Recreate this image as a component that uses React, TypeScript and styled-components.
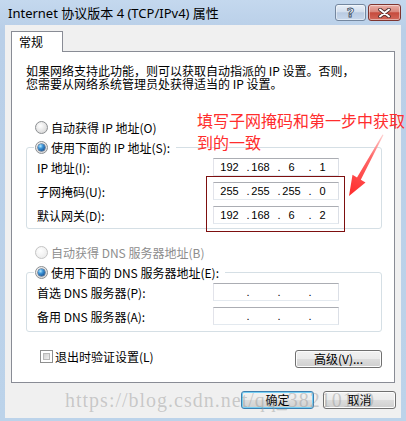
import React from "react";
import styled, { createGlobalStyle } from "styled-components";

const GlobalStyle = createGlobalStyle`
  html, body {
    margin: 0;
    padding: 0;
  }
  body {
    width: 406px;
    height: 421px;
    overflow: hidden;
    background: #bcd3ea;
    font-family: "Noto Sans CJK SC", sans-serif;
  }
`;

const Window = styled.div`
  position: relative;
  width: 406px;
  height: 421px;
  box-sizing: border-box;
  padding: 0 5px 3px 5px;
  display: flex;
  flex-direction: column;
  background: linear-gradient(#c4d8ee, #b9cfe8 30px, #bcd3ea);
`;

const TitleBar = styled.div`
  height: 25px;
  margin: 0 -5px;
  padding: 0 5px 0 8px;
  display: flex;
  align-items: flex-start;
`;

const TitleText = styled.span`
  flex: 1;
  font: 13px/27px "Noto Sans", "Noto Sans CJK SC", sans-serif;
  color: #000;
`;

const CaptionButtons = styled.div`
  display: flex;
  gap: 2px;
  margin-top: 4px;
`;

const CaptionButton = styled.div<{ $kind: "help" | "close" }>`
  width: ${(p) => (p.$kind === "close" ? 33 : 31)}px;
  height: 17px;
  box-sizing: border-box;
  border-radius: 3px;
  display: flex;
  align-items: center;
  justify-content: center;
  border: 1px solid ${(p) => (p.$kind === "close" ? "#7e3530" : "#74879f")};
  background: ${(p) =>
    p.$kind === "close"
      ? "linear-gradient(#eab0a8, #d9877c 45%, #c64b3d 52%, #d2685a)"
      : "linear-gradient(#e8eff8, #d3dfee 45%, #b9cbe2 52%, #c8d8ec)"};
  box-shadow: inset 0 0 0 1px rgba(255, 255, 255, 0.45);
`;

const HelpGlyph = styled.span`
  font: bold 13px/13px "DejaVu Sans", sans-serif;
  color: #f4f7fb;
  -webkit-text-stroke: 0.8px #3d4f66;
`;

const Client = styled.div`
  flex: 1;
  background: #f0f0f0;
  padding: 6px 6px 0 6px;
  display: flex;
  flex-direction: column;
`;

const TabStrip = styled.div`
  display: flex;
  height: 20px;
`;

const Tab = styled.div`
  width: 52px;
  box-sizing: border-box;
  border: 1px solid #898c95;
  border-bottom: none;
  background: #fff;
  padding-left: 7px;
  font-size: 12px;
  line-height: 19px;
  color: #000;
  position: relative;
  z-index: 1;
  margin-bottom: -1px;
  height: 21px;
`;

const Panel = styled.div`
  background: #fff;
  border: 1px solid #898c95;
  padding: 12px 12px 14px 14px;
  display: flex;
  flex-direction: column;
  font-size: 12px;
  color: #000;
`;

const Intro = styled.p`
  margin: 0;
  font-size: 12px;
  line-height: 13px;
  white-space: nowrap;
`;

const RadioRow = styled.div<{ $top?: number; $indent?: number; $disabled?: boolean }>`
  display: flex;
  align-items: center;
  gap: 3px;
  height: 20px;
  margin-top: ${(p) => p.$top ?? 0}px;
  padding-left: ${(p) => p.$indent ?? 0}px;
  color: ${(p) => (p.$disabled ? "#8d8d8d" : "#000")};
  white-space: nowrap;
`;

const Radio = styled.span<{ $checked?: boolean; $disabled?: boolean }>`
  position: relative;
  width: 13px;
  height: 13px;
  flex: none;
  box-sizing: border-box;
  border-radius: 50%;
  border: 1px solid ${(p) => (p.$disabled ? "#c4c4c4" : "#8c8f92")};
  background: ${(p) =>
    p.$disabled
      ? "radial-gradient(circle at 40% 35%, #ffffff, #eeeeee 70%)"
      : "radial-gradient(circle at 40% 35%, #ffffff, #e2e2e2 60%, #cdcdcd)"};

  &::after {
    content: "";
    display: ${(p) => (p.$checked ? "block" : "none")};
    position: absolute;
    left: 2px;
    top: 2px;
    width: 7px;
    height: 7px;
    border-radius: 50%;
    background: radial-gradient(circle at 35% 30%, #b6ecff 0, #3e95d8 35%, #0f4585 90%);
    box-shadow: 0 0 0 0.5px #1d3e66;
  }
`;

const Group = styled.fieldset<{ $padBottom: number }>`
  margin: 0;
  padding: 0 0 ${(p) => p.$padBottom}px 7px;
  border: 1px solid #d5dfe5;
  border-radius: 3px;
  min-width: 0;
`;

const Legend = styled.legend`
  padding: 0 6px 0 1px;
  margin: 0;
`;

const Rows = styled.div`
  margin-top: -2px;
`;

const FieldRow = styled.div`
  display: grid;
  grid-template-columns: 176px 126px;
  height: 24px;
  align-items: center;
  padding-left: 3px;
  white-space: nowrap;
`;

const IpBox = styled.div`
  height: 18px;
  box-sizing: border-box;
  border: 1px solid;
  border-color: #abadb3 #dbdfe6 #e3e9ef #e2e3ea;
  background: #fff;
  display: grid;
  grid-template-columns: repeat(4, 31px);
  font: 11px/16px "Liberation Sans", sans-serif;
  color: #000;
`;

const Octet = styled.div`
  display: grid;
  grid-template-columns: 6px 19px 6px;
  text-align: center;
`;

const OptionsRow = styled.div`
  display: flex;
  justify-content: space-between;
  align-items: flex-start;
  margin-top: 18px;
  padding-left: 14px;
`;

const CheckLabel = styled.label`
  display: flex;
  align-items: center;
  gap: 2px;
  height: 13px;
  white-space: nowrap;
`;

const CheckBox = styled.span`
  width: 13px;
  height: 13px;
  box-sizing: border-box;
  border: 1px solid #8e8f8f;
  background: #fff;
  padding: 2px;
  &::after {
    content: "";
    display: block;
    width: 100%;
    height: 100%;
    background: linear-gradient(135deg, #cbcbcb, #e4e4e4 60%, #f4f4f4);
    box-shadow: inset 0 0 0 1px #b9b9b9;
  }
`;

const Button = styled.button<{ $width: number; $default?: boolean }>`
  width: ${(p) => p.$width}px;
  height: 18px;
  box-sizing: border-box;
  padding: 0;
  border-radius: 3px;
  border: 1px solid ${(p) => (p.$default ? "#3c7fb1" : "#707070")};
  background: linear-gradient(#f2f2f2, #ebebeb 49%, #dddddd 50%, #cfcfcf);
  box-shadow: inset 0 0 0 1px ${(p) => (p.$default ? "#78cff4" : "#fcfcfc")};
  font: 12px/16px "Noto Sans CJK SC", sans-serif;
  color: #000;
`;

const Footer = styled.div`
  display: flex;
  justify-content: flex-end;
  gap: 9px;
  margin: 8px -1px 0 0;
`;

const Note = styled.div`
  position: absolute;
  left: 197px;
  top: 109px;
  font: 16px/22px "Noto Sans CJK SC", sans-serif;
  color: #ff2d2d;
  white-space: nowrap;
`;

const Highlight = styled.div`
  position: absolute;
  left: 206px;
  top: 176px;
  width: 139px;
  height: 56px;
  box-sizing: border-box;
  border: 1px solid #7d0f0f;
`;

const Arrow = styled.svg`
  position: absolute;
  left: 340px;
  top: 130px;
`;

const Watermark = styled.div`
  position: absolute;
  left: 65px;
  top: 390px;
  font: 20px/20px "Liberation Serif", serif;
  letter-spacing: 1px;
  color: rgba(150, 150, 150, 0.45);
  white-space: nowrap;
  pointer-events: none;
`;

function IpField({ value }: { value?: string[] }) {
  return (
    <IpBox>
      {[0, 1, 2, 3].map((i) => (
        <Octet key={i}>
          <span>{i > 0 ? "." : ""}</span>
          <span>{value ? value[i] : ""}</span>
          <span />
        </Octet>
      ))}
    </IpBox>
  );
}

export default function App() {
  return (
    <>
      <GlobalStyle />
      <Window>
        <TitleBar>
          <TitleText>Internet 协议版本 4 (TCP/IPv4) 属性</TitleText>
          <CaptionButtons>
            <CaptionButton $kind="help">
              <HelpGlyph>?</HelpGlyph>
            </CaptionButton>
            <CaptionButton $kind="close">
              <svg width="13" height="10" viewBox="0 0 13 10">
                <path d="M2 1.5 L11 8.5 M11 1.5 L2 8.5" stroke="#4b2b2b" strokeWidth="3.6" strokeLinecap="round" />
                <path d="M2 1.5 L11 8.5 M11 1.5 L2 8.5" stroke="#ffffff" strokeWidth="2" strokeLinecap="round" />
              </svg>
            </CaptionButton>
          </CaptionButtons>
        </TitleBar>

        <Client>
          <TabStrip>
            <Tab>常规</Tab>
          </TabStrip>
          <Panel>
            <Intro>
              如果网络支持此功能，则可以获取自动指派的 IP 设置。否则，
              <br />
              您需要从网络系统管理员处获得适当的 IP 设置。
            </Intro>

            <RadioRow $top={27} $indent={9}>
              <Radio />
              自动获得 IP 地址(O)
            </RadioRow>
            <Group $padBottom={1}>
              <Legend>
                <RadioRow>
                  <Radio $checked />
                  使用下面的 IP 地址(S):
                </RadioRow>
              </Legend>
              <Rows>
                <FieldRow>
                  <span>IP 地址(I):</span>
                  <IpField value={["192", "168", "6", "1"]} />
                </FieldRow>
                <FieldRow>
                  <span>子网掩码(U):</span>
                  <IpField value={["255", "255", "255", "0"]} />
                </FieldRow>
                <FieldRow>
                  <span>默认网关(D):</span>
                  <IpField value={["192", "168", "6", "2"]} />
                </FieldRow>
              </Rows>
            </Group>

            <RadioRow $top={13} $indent={9} $disabled>
              <Radio $disabled />
              自动获得 DNS 服务器地址(B)
            </RadioRow>
            <Group $padBottom={3}>
              <Legend>
                <RadioRow>
                  <Radio $checked />
                  使用下面的 DNS 服务器地址(E):
                </RadioRow>
              </Legend>
              <Rows>
                <FieldRow>
                  <span>首选 DNS 服务器(P):</span>
                  <IpField />
                </FieldRow>
                <FieldRow>
                  <span>备用 DNS 服务器(A):</span>
                  <IpField />
                </FieldRow>
              </Rows>
            </Group>

            <OptionsRow>
              <CheckLabel>
                <CheckBox />
                退出时验证设置(L)
              </CheckLabel>
              <Button $width={87}>高级(V)...</Button>
            </OptionsRow>
          </Panel>

          <Footer>
            <Button $width={73} $default>
              确定
            </Button>
            <Button $width={73}>取消</Button>
          </Footer>
        </Client>

        <Note>
          填写子网掩码和第一步中获取
          <br />
          到的一致
        </Note>
        <Highlight />
        <Arrow width="50" height="70" viewBox="0 0 50 70">
          <defs>
            <linearGradient id="arrowFill" x1="43" y1="5" x2="9" y2="66" gradientUnits="userSpaceOnUse">
              <stop offset="0" stopColor="#ffd0d0" />
              <stop offset="0.35" stopColor="#ff6a6a" />
              <stop offset="1" stopColor="#ff2a2a" />
            </linearGradient>
          </defs>
          <polygon
            points="43.5,5 20.8,49.8 25.5,52.5 9,66 12.5,44.8 17,47.6 42.5,4.6"
            fill="url(#arrowFill)"
          />
        </Arrow>
        <Watermark>https://blog.csdn.net/qq_38210119</Watermark>
      </Window>
    </>
  );
}
